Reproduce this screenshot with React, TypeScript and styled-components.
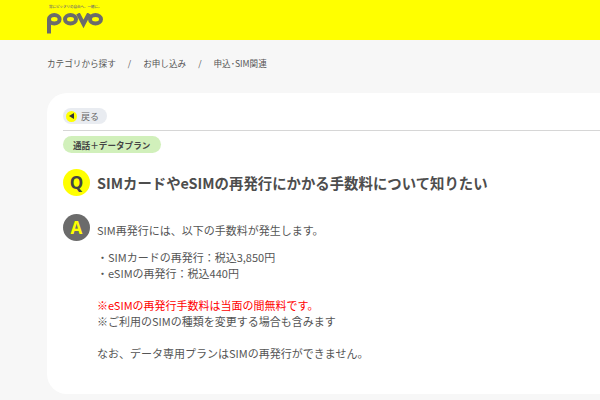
import React from "react";
import styled, { createGlobalStyle } from "styled-components";

const Global = createGlobalStyle`
  html, body { margin: 0; padding: 0; background: #f7f7f7; overflow: hidden; }
  body { font-family: "Noto Sans CJK JP", "Noto Sans", sans-serif; color: #555; width: 600px; height: 400px; }
`;

const Page = styled.div`
  width: 600px;
  height: 400px;
  overflow: hidden;
  display: flex;
  flex-direction: column;
`;

const Header = styled.header`
  height: 40px;
  flex: none;
  background: #ffff00;
  padding: 4px 0 0 47px;
  box-sizing: border-box;
`;

const Tagline = styled.div`
  font-size: 3.5px;
  font-weight: 500;
  line-height: 6px;
  margin-left: 2px;
  color: #6b6b6b;
  white-space: nowrap;
`;

const Logo = styled.svg`
  display: block;
  width: 57px;
  height: 21px;
  margin-top: 3px;
`;

const Crumbs = styled.nav`
  display: flex;
  align-items: center;
  height: 46px;
  margin-bottom: 7px;
  flex: none;
  padding-left: 47px;
  font-size: 8.6px;
  color: #555;
`;

const Sep = styled.span`
  margin: 0 12px;
`;

const Card = styled.main`
  margin-left: 47px;
  width: 620px;
  height: 301px;
  flex: none;
  background: #fff;
  border-radius: 20px;
  padding: 15px 0 0 16px;
  box-sizing: border-box;
`;

const Back = styled.div`
  display: flex;
  width: fit-content;
  align-items: center;
  height: 16px;
  padding: 0 8px 0 3px;
  border-radius: 8px;
  background: #e9ecf1;
  font-size: 9px;
  color: #666;
  gap: 4px;
`;

const BackDot = styled.span`
  width: 11px;
  height: 11px;
  border-radius: 50%;
  background: #ffff00;
  display: flex;
  align-items: center;
  justify-content: center;
`;

const Arrow = styled.span`
  width: 0;
  height: 0;
  border-style: solid;
  border-width: 3px 5px 3px 0;
  border-color: transparent #333 transparent transparent;
`;

const Rule = styled.hr`
  margin: 6px 0 5px;
  border: 0;
  border-top: 1px solid #d6d6d6;
`;

const Tag = styled.div`
  display: flex;
  width: fit-content;
  align-items: center;
  height: 17px;
  padding: 0 11px 0 10px;
  border-radius: 9px;
  background: #d1f0bb;
  font-size: 8.6px;
  font-weight: 700;
  color: #444;
`;

const QaRow = styled.section<{ $top: number }>`
  display: flex;
  align-items: flex-start;
  gap: 7px;
  margin-top: ${(p) => p.$top}px;
`;

const Badge = styled.div<{ $answer?: boolean }>`
  width: 27px;
  height: 27px;
  flex: none;
  border-radius: 50%;
  display: flex;
  align-items: center;
  justify-content: center;
  font-family: "Noto Sans", sans-serif;
  font-weight: 700;
  font-size: 17px;
  background: ${(p) => (p.$answer ? "#6b6b6b" : "#ffff00")};
  color: ${(p) => (p.$answer ? "#ffff00" : "#444")};
`;

const Question = styled.h1`
  margin: 0;
  font-size: 14.4px;
  line-height: 27px;
  font-weight: 700;
  color: #4d4d4d;
  white-space: nowrap;
`;

const Answer = styled.div`
  font-size: 11px;
  line-height: 16px;
  color: #555;
  padding-top: 8px;
  white-space: nowrap;
`;

const Line = styled.p<{ $red?: boolean; $gap?: number }>`
  margin: ${(p) => p.$gap ?? 0}px 0 0;
  color: ${(p) => (p.$red ? "#ff0000" : "inherit")};
`;

export default function App() {
  return (
    <Page>
      <Global />
      <Header>
        <Tagline>常にピッタリの自由へ、一緒に。</Tagline>
        <Logo viewBox="0 0 57 21">
          <g fill="none" stroke="#6b6b6b" strokeWidth="4">
            <ellipse cx="7.3" cy="6.2" rx="5.3" ry="4.2" />
            <path d="M2 6.2V20.5" />
            <ellipse cx="23.5" cy="6.2" rx="5.5" ry="4.2" />
            <path d="M31 0.5L36.5 11L42 0.5" />
            <ellipse cx="48.5" cy="6.2" rx="5.5" ry="4.2" />
          </g>
        </Logo>
      </Header>
      <Crumbs>
        <span>カテゴリから探す</span>
        <Sep>/</Sep>
        <span>お申し込み</span>
        <Sep>/</Sep>
        <span>申込･SIM関連</span>
      </Crumbs>
      <Card>
        <Back>
          <BackDot>
            <Arrow />
          </BackDot>
          戻る
        </Back>
        <Rule />
        <Tag>通話＋データプラン</Tag>
        <QaRow $top={16}>
          <Badge>Q</Badge>
          <Question>SIMカードやeSIMの再発行にかかる手数料について知りたい</Question>
        </QaRow>
        <QaRow $top={18}>
          <Badge $answer>A</Badge>
          <Answer>
            <Line>SIM再発行には、以下の手数料が発生します。</Line>
            <Line $gap={11}>・SIMカードの再発行：税込3,850円</Line>
            <Line>・eSIMの再発行：税込440円</Line>
            <Line $red $gap={16}>※eSIMの再発行手数料は当面の間無料です。</Line>
            <Line>※ご利用のSIMの種類を変更する場合も含みます</Line>
            <Line $gap={16}>なお、データ専用プランはSIMの再発行ができません。</Line>
          </Answer>
        </QaRow>
      </Card>
    </Page>
  );
}
